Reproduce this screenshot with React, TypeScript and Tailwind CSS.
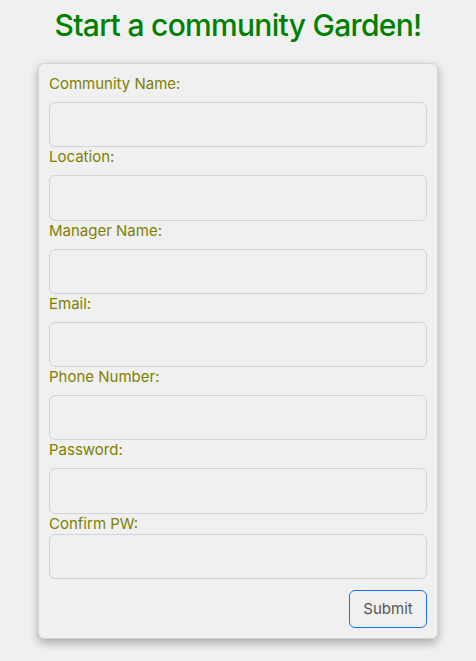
import React from 'react';

const fields = [
  { label: 'Community Name:', type: 'text' },
  { label: 'Location:', type: 'text' },
  { label: 'Manager Name:', type: 'text' },
  { label: 'Email:', type: 'email' },
  { label: 'Phone Number:', type: 'tel' },
  { label: 'Password:', type: 'password' },
];

export default function App() {
  return (
    <div className="min-h-screen bg-[#f0f0f0] font-['Inter',sans-serif] pt-[5px]">
      <h1 className="text-center text-[30px] leading-[40px] font-medium text-[#008000] tracking-[-0.7px]">
        Start a community Garden!
      </h1>
      <form
        className="mx-auto mt-[18px] w-[400px] rounded-[6px] border border-[#d4d4d8] bg-[#f0f0f0] p-[10px] shadow-[0_4px_10px_rgba(0,0,0,0.3)]"
        onSubmit={(e) => e.preventDefault()}
      >
        {fields.map((f) => (
          <div key={f.label}>
            <label className="block text-[15px] leading-[20px] text-[#808000] mb-[8px]">{f.label}</label>
            <input
              type={f.type}
              className="block h-[45.25px] w-full rounded-[6px] border border-[#cfd3da] bg-[#f0f0f0] outline-none"
            />
          </div>
        ))}
        <label className="block text-[15px] leading-[20px] text-[#808000]">Confirm PW:</label>
        <input
          type="password"
          className="block h-[45.25px] w-full rounded-[6px] border border-[#cfd3da] bg-[#f0f0f0] outline-none"
        />
        <div className="mt-[11px] flex justify-end">
          <button
            type="submit"
            className="h-[38px] w-[78px] rounded-[6px] border border-[#1a73f0] bg-[#f0f0f0] text-[15px] text-[#555]"
          >
            Submit
          </button>
        </div>
      </form>
    </div>
  );
}
